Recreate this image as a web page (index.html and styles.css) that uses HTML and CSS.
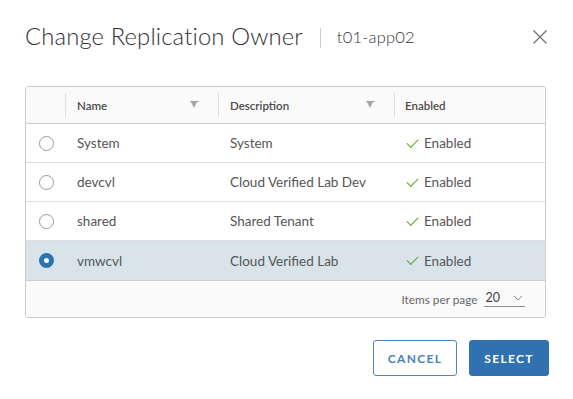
FILE: index.html
```html
<!DOCTYPE html>
<html lang="en">
<head>
    <meta charset="UTF-8">
    <meta name="viewport" content="width=device-width, initial-scale=1.0">
    <title>Change Replication Owner</title>
    <link rel="stylesheet" href="styles.css">
</head>
<body>
    <div class="modal">
        <div class="modal-header">
            <h1 class="modal-title">Change Replication Owner</h1>
            <span class="title-divider"></span>
            <span class="modal-subtitle">t01-app02</span>
            <button class="close-btn" aria-label="Close">
                <svg width="16" height="16" viewBox="0 0 16 16">
                    <path d="M1.5 1.5 L14.5 14.5 M14.5 1.5 L1.5 14.5" stroke="#747474" stroke-width="1.4" fill="none"/>
                </svg>
            </button>
        </div>

        <div class="datagrid">
            <div class="dg-row dg-head">
                <div class="dg-cell dg-select"></div>
                <div class="dg-cell dg-name">Name <span class="filter"></span></div>
                <div class="dg-cell dg-desc">Description <span class="filter"></span></div>
                <div class="dg-cell dg-enabled">Enabled</div>
            </div>

            <div class="dg-row">
                <div class="dg-cell dg-select"><span class="radio"></span></div>
                <div class="dg-cell dg-name">System</div>
                <div class="dg-cell dg-desc">System</div>
                <div class="dg-cell dg-enabled"><span class="check"></span>Enabled</div>
            </div>
            <div class="dg-row">
                <div class="dg-cell dg-select"><span class="radio"></span></div>
                <div class="dg-cell dg-name">devcvl</div>
                <div class="dg-cell dg-desc">Cloud Verified Lab Dev</div>
                <div class="dg-cell dg-enabled"><span class="check"></span>Enabled</div>
            </div>
            <div class="dg-row">
                <div class="dg-cell dg-select"><span class="radio"></span></div>
                <div class="dg-cell dg-name">shared</div>
                <div class="dg-cell dg-desc">Shared Tenant</div>
                <div class="dg-cell dg-enabled"><span class="check"></span>Enabled</div>
            </div>
            <div class="dg-row selected">
                <div class="dg-cell dg-select"><span class="radio checked"></span></div>
                <div class="dg-cell dg-name">vmwcvl</div>
                <div class="dg-cell dg-desc">Cloud Verified Lab</div>
                <div class="dg-cell dg-enabled"><span class="check"></span>Enabled</div>
            </div>

            <div class="dg-footer">
                <span class="page-label">Items per page</span>
                <span class="page-size">20
                    <svg width="10" height="6" viewBox="0 0 10 6">
                        <path d="M1 1 L5 5 L9 1" stroke="#8c8c8c" stroke-width="1" fill="none"/>
                    </svg>
                </span>
            </div>
        </div>

        <div class="modal-footer">
            <button class="btn btn-outline">CANCEL</button>
            <button class="btn btn-primary">SELECT</button>
        </div>
    </div>
</body>
</html>
```

FILE: styles.css
```css
body {
    margin: 0;
    background: #fff;
    font-family: Lato, "Open Sans", sans-serif;
    color: #565656;
}

.modal {
    width: 573px;
    height: 399px;
    padding: 22px 24px 0 25px;
    box-sizing: border-box;
}

.modal-header {
    display: flex;
    align-items: center;
    height: 28px;
}

.modal-title {
    margin: 0;
    font-size: 23.8px;
    font-weight: 300;
    color: #313131;
    letter-spacing: 0.15px;
}

.title-divider {
    width: 1px;
    height: 20px;
    background: #ccc;
    margin: 3px 16px 0 17px;
}

.modal-subtitle {
    font-size: 16.5px;
    font-weight: 300;
    color: #333;
    margin-top: 2px;
    letter-spacing: 0.2px;
}

.close-btn {
    margin-left: auto;
    margin-right: 1px;
    margin-top: 2px;
    border: 0;
    background: none;
    padding: 0;
    display: flex;
}

.datagrid {
    margin-top: 36px;
    width: 521px;
    border: 1px solid #ccc;
    border-radius: 3px;
    box-sizing: border-box;
    overflow: hidden;
}

.dg-row {
    display: flex;
    height: 39px;
    border-bottom: 1px solid #ddd;
    box-sizing: border-box;
    font-size: 13.5px;
}

.dg-row.selected {
    background: #d9e4ea;
    border-bottom-color: #ccc;
    height: 40px;
}

.dg-head {
    height: 37px;
    background: #fafafa;
    border-bottom-color: #ccc;
    font-size: 11.5px;
    font-weight: 600;
    color: #4a4a4a;
}

.dg-cell {
    display: flex;
    align-items: center;
    padding: 0 12px;
    box-sizing: border-box;
    position: relative;
}

.dg-select {
    width: 38px;
    justify-content: center;
    padding: 0;
    margin-left: 1px;
}

.dg-name {
    width: 153px;
}

.dg-desc {
    width: 176px;
}

.dg-enabled {
    flex: 1;
}

.dg-head .dg-name::before,
.dg-head .dg-desc::before,
.dg-head .dg-enabled::before {
    content: "";
    position: absolute;
    left: 0;
    top: 6px;
    bottom: 6px;
    width: 1px;
    background: #ddd;
}

.filter {
    margin-left: auto;
    margin-right: 9px;
    width: 0;
    height: 0;
    border-left: 3.5px solid transparent;
    border-right: 3.5px solid transparent;
    border-top: 6px solid #a6a6a6;
    position: relative;
}

.filter::after {
    content: "";
    position: absolute;
    left: -4.5px;
    top: -7px;
    width: 9px;
    height: 1px;
    background: #a6a6a6;
}

.radio {
    width: 15px;
    height: 15px;
    border: 1px solid #9a9a9a;
    border-radius: 50%;
    box-sizing: border-box;
    background: #fff;
}

.radio.checked {
    border: 5px solid #2d73b4;
    background: #fff;
}

.check {
    width: 10px;
    height: 5px;
    border-left: 1.3px solid #62a420;
    border-bottom: 1.3px solid #62a420;
    transform: rotate(-45deg);
    margin: -3px 6px 0 2px;
}

.dg-row .dg-enabled {
    padding-left: 11px;
}

.dg-footer {
    height: 36px;
    background: #fafafa;
    display: flex;
    align-items: center;
    justify-content: flex-end;
    padding-right: 20px;
    font-size: 11.8px;
    color: #666;
}

.page-size {
    display: flex;
    align-items: center;
    gap: 13px;
    margin-left: 6px;
    padding: 0 2px 1px 2px;
    border-bottom: 1px solid #8c8c8c;
    font-size: 12.5px;
    color: #444;
    line-height: 14px;
}

.modal-footer {
    display: flex;
    justify-content: flex-end;
    gap: 12px;
    margin-top: 22px;
}

.btn {
    height: 36px;
    border-radius: 3px;
    font-family: Lato, "Open Sans", sans-serif;
    font-size: 12px;
    font-weight: 700;
    letter-spacing: 1.3px;
    box-sizing: border-box;
}

.btn-outline {
    width: 84px;
    background: #fff;
    border: 1px solid #4d87c0;
    color: #4a7fb6;
}

.btn-primary {
    width: 80px;
    background: #3171b0;
    border: 1px solid #3171b0;
    color: #fff;
}
```
